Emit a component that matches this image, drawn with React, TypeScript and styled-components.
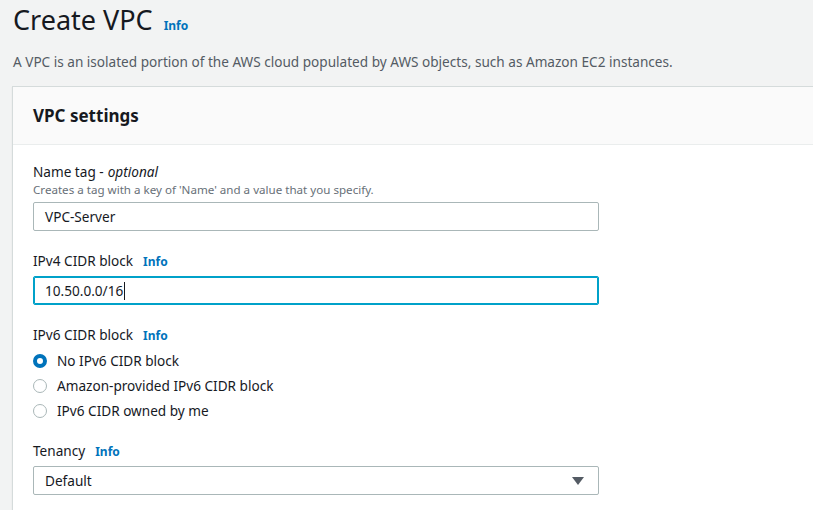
import React, { FC } from "react";
import styled, { createGlobalStyle } from "styled-components";

const GlobalStyle = createGlobalStyle`
  html, body {
    margin: 0;
    padding: 0;
    background: #f2f3f3;
    font-family: "Noto Sans", "Open Sans", Arial, sans-serif;
    color: #16191f;
    overflow: hidden;
  }
`;

const Page = styled.div`
  width: 813px;
  height: 510px;
  overflow: hidden;
  padding-top: 2px;
`;

const PageHeader = styled.div`
  padding: 0 13px;
`;

const TitleRow = styled.div`
  display: flex;
  align-items: baseline;
  gap: 11px;
`;

const Title = styled.h1`
  margin: 0;
  font-size: 27px;
  line-height: 36px;
  font-weight: 400;
  color: #16191f;
`;

const InfoLink = styled.a<{ $gap?: number }>`
  font-size: 12px;
  font-weight: 700;
  color: #0073bb;
  text-decoration: none;
  margin-left: ${(p) => p.$gap ?? 0}px;
`;

const Description = styled.p`
  margin: 14px 0 0;
  font-size: 13.6px;
  line-height: 20px;
  color: #545b64;
`;

const Card = styled.section`
  margin: 14px -20px 0 12px;
  background: #fff;
  border: 1px solid #d5dbdb;
  border-right: none;
  box-shadow: 0 1px 1px 0 rgba(0, 28, 36, 0.1);
`;

const CardHeader = styled.div`
  height: 57px;
  display: flex;
  align-items: center;
  padding: 0 20px;
  background: #fafafa;
  border-bottom: 1px solid #eaeded;
`;

const CardTitle = styled.h2`
  margin: 0;
  font-size: 17px;
  font-weight: 700;
  color: #16191f;
`;

const CardBody = styled.div`
  display: flex;
  flex-direction: column;
  gap: 20px;
  padding: 17px 20px 20px;
`;

const Field = styled.div`
  display: flex;
  flex-direction: column;
  width: 566px;
`;

const Label = styled.label`
  display: flex;
  align-items: baseline;
  font-size: 13.6px;
  line-height: 20px;
  color: #16191f;

  em {
    font-style: italic;
    margin-left: 4px;
  }
`;

const Hint = styled.span`
  font-size: 11.6px;
  line-height: 16px;
  color: #687078;
`;

const TextInput = styled.div<{ $focused?: boolean }>`
  margin-top: 4px;
  height: 29px;
  box-sizing: border-box;
  display: flex;
  align-items: center;
  padding: 0 11px;
  border: 1px solid ${(p) => (p.$focused ? "#00a1c9" : "#aab7b8")};
  box-shadow: ${(p) => (p.$focused ? "inset 0 0 0 1px #00a1c9" : "none")};
  border-radius: 2px;
  background: #fff;
  font-size: 13.6px;
  color: #16191f;
`;

const Caret = styled.span`
  display: inline-block;
  width: 1px;
  height: 18px;
  background: #16191f;
  margin-left: 1px;
`;

const RadioGroup = styled.div`
  display: flex;
  flex-direction: column;
  margin: 2px 0 -2px;
`;

const RadioRow = styled.div`
  display: flex;
  align-items: center;
  height: 25px;
  gap: 10px;
  font-size: 13.6px;
  color: #16191f;
`;

const RadioDot = styled.span<{ $checked?: boolean }>`
  width: 14px;
  height: 14px;
  box-sizing: border-box;
  border-radius: 50%;
  border: ${(p) => (p.$checked ? "4px solid #0073bb" : "1px solid #aab7b8")};
  background: #fff;
  flex-shrink: 0;
`;

const Select = styled(TextInput)`
  justify-content: space-between;
  padding-right: 14px;
`;

const Arrow = () => (
  <svg width="12" height="8" viewBox="0 0 12 8">
    <path d="M0 0 H12 L6 8 Z" fill="#545b64" />
  </svg>
);

const radios = [
  { label: "No IPv6 CIDR block", checked: true },
  { label: "Amazon-provided IPv6 CIDR block" },
  { label: "IPv6 CIDR owned by me" },
];

const App: FC = () => {
  return (
    <>
      <GlobalStyle />
      <Page>
        <PageHeader>
          <TitleRow>
            <Title>Create VPC</Title>
            <InfoLink>Info</InfoLink>
          </TitleRow>
          <Description>
            A VPC is an isolated portion of the AWS cloud populated by AWS objects, such as Amazon EC2
            instances.
          </Description>
        </PageHeader>

        <Card>
          <CardHeader>
            <CardTitle>VPC settings</CardTitle>
          </CardHeader>
          <CardBody>
            <Field>
              <Label>
                Name tag -<em>optional</em>
              </Label>
              <Hint>Creates a tag with a key of 'Name' and a value that you specify.</Hint>
              <TextInput>VPC-Server</TextInput>
            </Field>

            <Field>
              <Label>
                IPv4 CIDR block
                <InfoLink $gap={10}>Info</InfoLink>
              </Label>
              <TextInput $focused>
                10.50.0.0/16
                <Caret />
              </TextInput>
            </Field>

            <Field>
              <Label>
                IPv6 CIDR block
                <InfoLink $gap={10}>Info</InfoLink>
              </Label>
              <RadioGroup>
                {radios.map((r, key) => (
                  <RadioRow key={key}>
                    <RadioDot $checked={r.checked} />
                    {r.label}
                  </RadioRow>
                ))}
              </RadioGroup>
            </Field>

            <Field>
              <Label>
                Tenancy
                <InfoLink $gap={10}>Info</InfoLink>
              </Label>
              <Select>
                Default
                <Arrow />
              </Select>
            </Field>
          </CardBody>
        </Card>
      </Page>
    </>
  );
};

export default App;
